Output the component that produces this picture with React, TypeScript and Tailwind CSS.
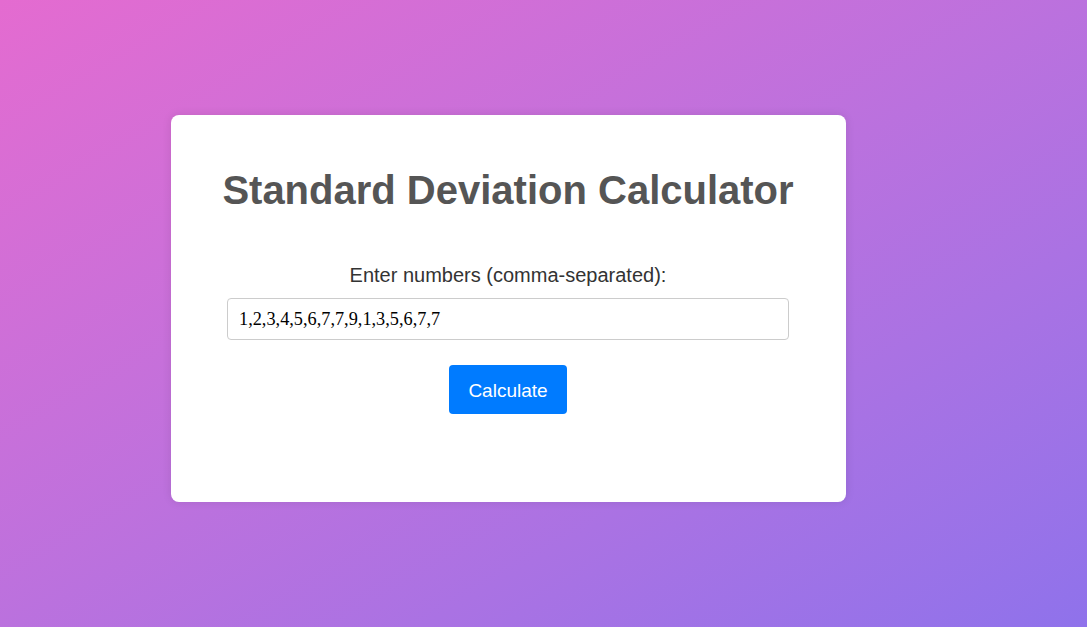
import React, {useState} from "react";

function App() {
    const [numbers, setNumbers] = useState<string>("1,2,3,4,5,6,7,7,9,1,3,5,6,7,7");

    return (
        <div className="min-h-[627px] w-full bg-gradient-to-br from-[#e46bd0] to-[#8f72eb] pt-[115px] pl-[171px] font-['Liberation_Sans',Arial,sans-serif]">
            <div className="w-[675px] rounded-lg bg-white pl-[56px] pr-[57px] pt-[51px] pb-[88px] text-center shadow-[0_0_10px_rgba(0,0,0,0.1)]">
                <h1 className="-mx-[20px] whitespace-nowrap text-[40px] leading-[48px] font-bold text-[#555555]">
                    Standard Deviation Calculator
                </h1>

                <label htmlFor="numbers" className="mt-[49px] block text-[20px] leading-[24px] text-[#333333]">
                    Enter numbers (comma-separated):
                </label>
                <input
                    id="numbers"
                    type="text"
                    value={numbers}
                    onChange={(e) => setNumbers(e.target.value)}
                    className="mt-[11px] block h-[42px] w-full rounded-[4px] border border-[#cccccc] px-[11px] font-['Liberation_Serif',serif] text-[18.3px] text-black outline-none"
                />

                <button className="mt-[25px] h-[49px] w-[118px] rounded-[4px] bg-[#007bff] pt-[3px] text-[19px] text-white">
                    Calculate
                </button>
            </div>
        </div>
    );
}

export default App;
